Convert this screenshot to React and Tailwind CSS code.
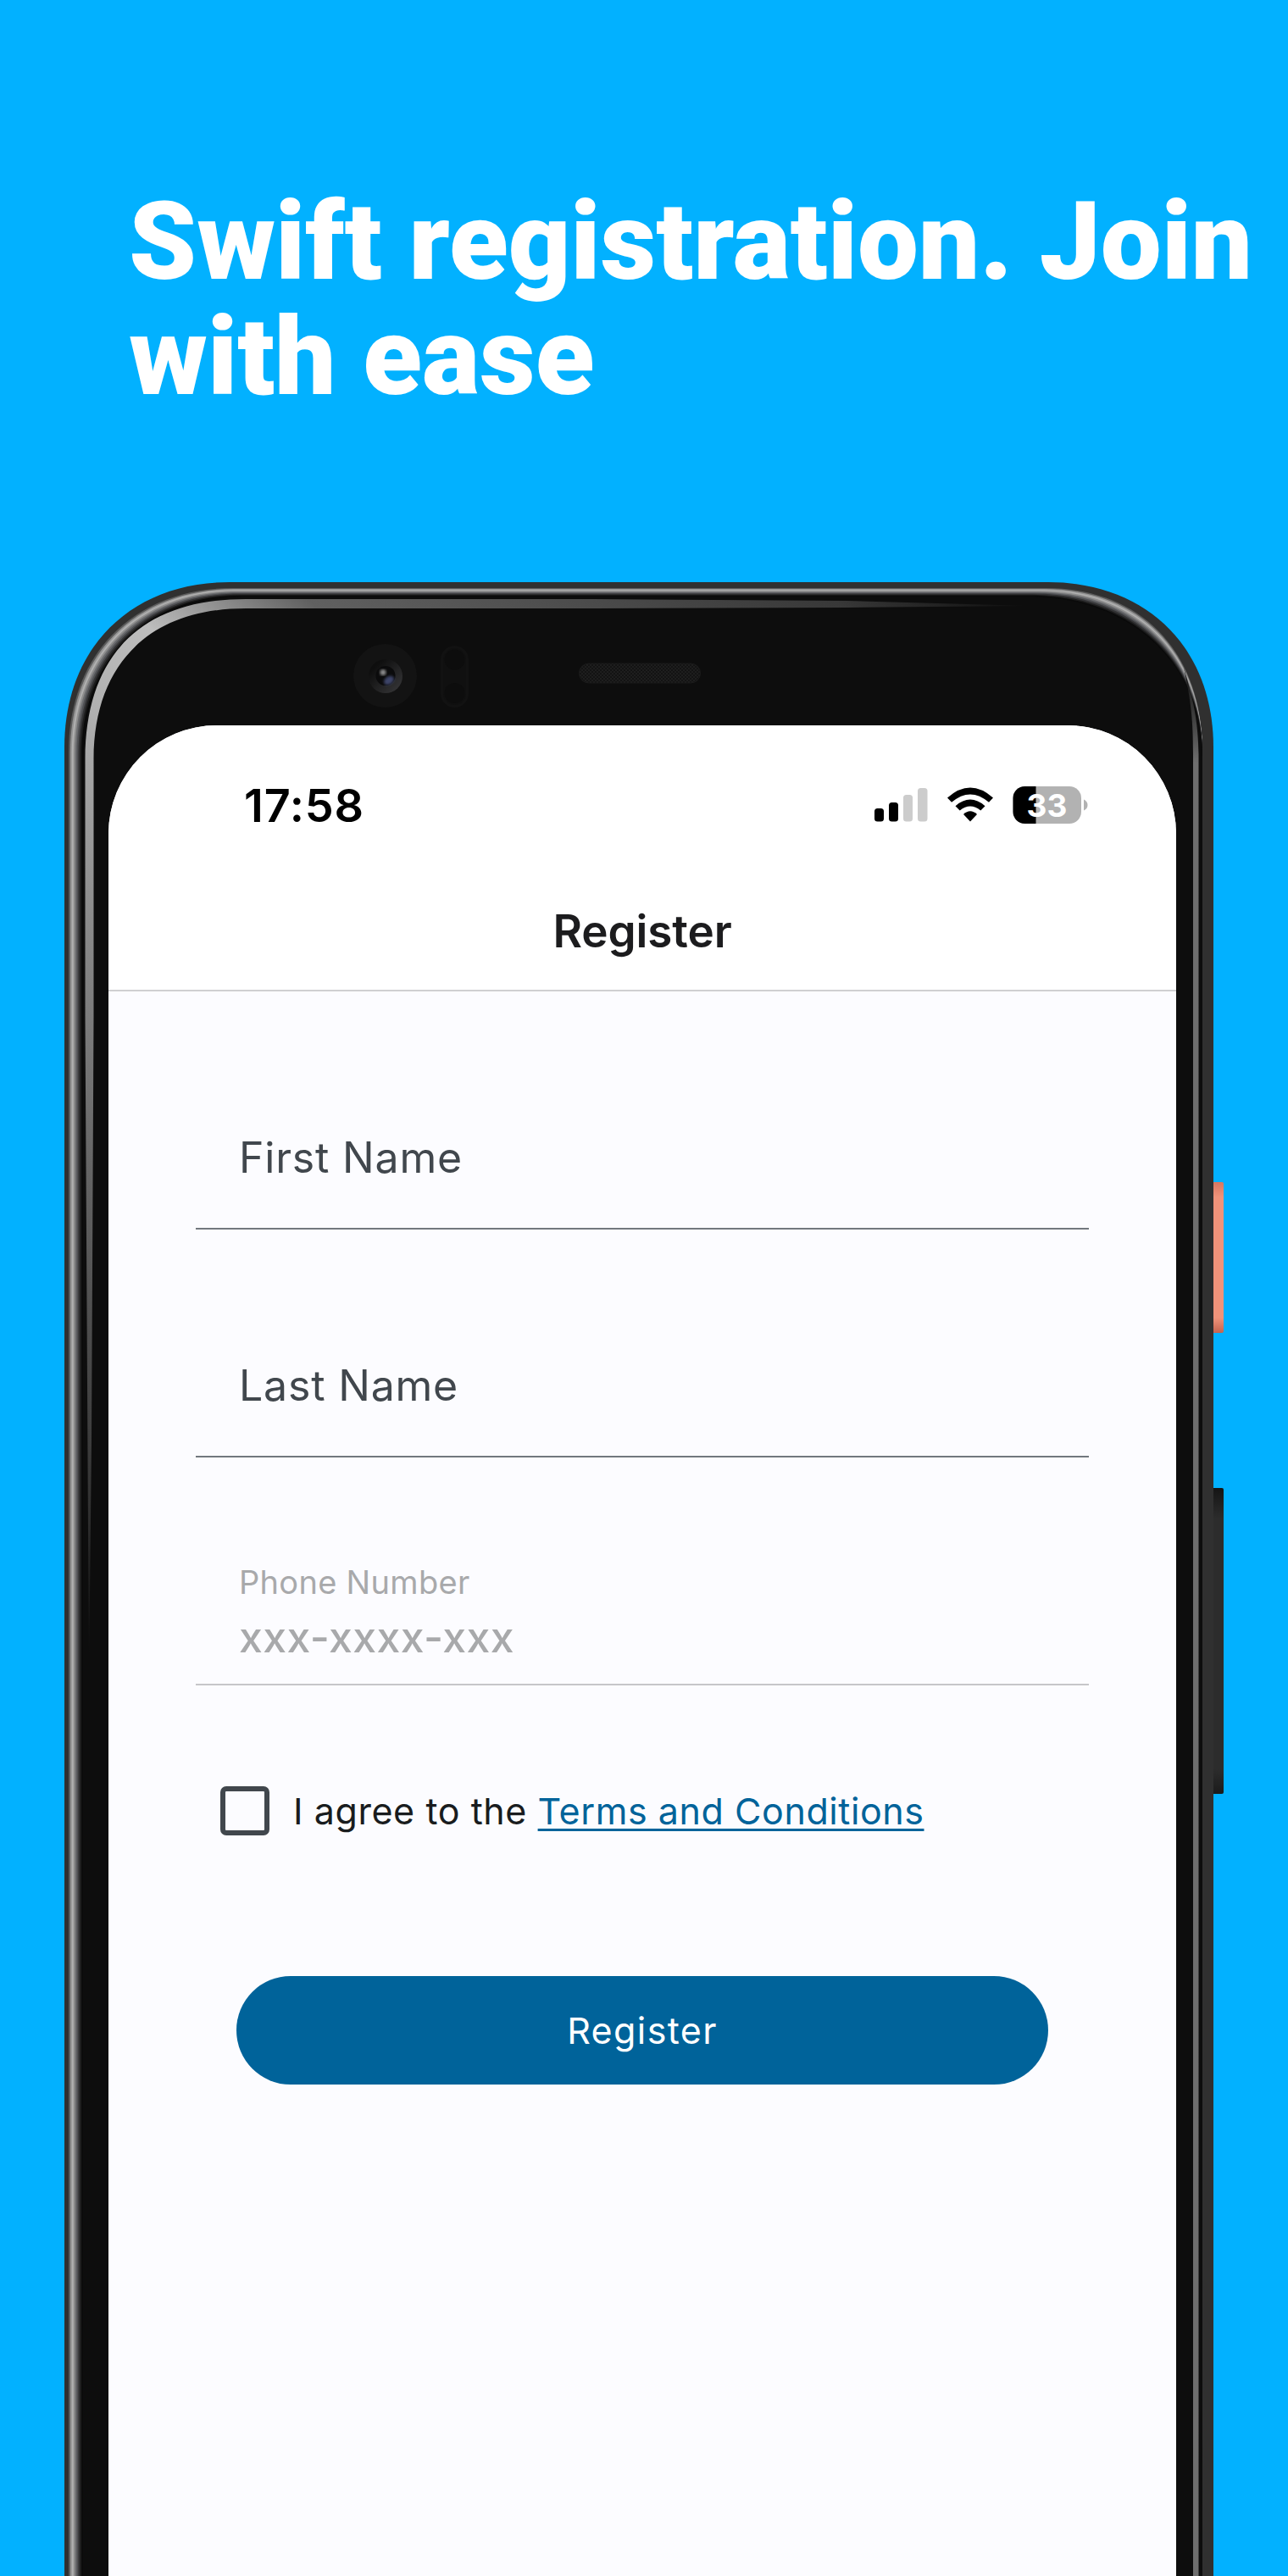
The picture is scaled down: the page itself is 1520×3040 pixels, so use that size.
const frame = (l, t, rx, r, b = 3060) => {
  const c = 195 - (l - 76) * 0.3;
  const k = 0.4 * c;
  return `M${l} ${b}V${t + c}C${l} ${t + k} ${l + k} ${t} ${l + c} ${t}H${r - rx}C${r - rx * 0.4} ${t} ${r} ${t + rx * 0.4} ${r} ${t + c}V${b}Z`;
};

const rim = ['#5a5a5a', '#949494', '#b0b0b0', '#8f8f8f', '#6c6d70', '#505154', '#333335', '#1c1c1c', '#0a0a0a'];

function Bezel() {
  return (
    <svg className="absolute inset-0" width="1520" height="3040" viewBox="0 0 1520 3040" fill="none">
      <defs>
        <linearGradient id="glow" gradientUnits="userSpaceOnUse" x1="100" y1="1950" x2="1215" y2="712">
          <stop offset="0" stopColor="#0d0d0d" />
          <stop offset="0.09" stopColor="#353535" />
          <stop offset="0.39" stopColor="#8c8c8c" />
          <stop offset="0.5" stopColor="#b0b0b0" />
          <stop offset="0.57" stopColor="#bdbdbd" />
          <stop offset="0.66" stopColor="#606060" />
          <stop offset="0.75" stopColor="#525252" />
          <stop offset="0.91" stopColor="#383838" />
          <stop offset="1" stopColor="#0d0d0d" />
        </linearGradient>
        <linearGradient id="side" gradientUnits="userSpaceOnUse" x1="0" y1="790" x2="0" y2="900">
          <stop offset="0" stopColor="#0d0d0d" />
          <stop offset="1" stopColor="#6e6e6e" />
        </linearGradient>
        <linearGradient id="lens" x1="0" y1="0" x2="1" y2="1">
          <stop offset="0.2" stopColor="#0e0e0e" />
          <stop offset="1" stopColor="#3a3a3c" />
        </linearGradient>
        <linearGradient id="power" x1="0" y1="0" x2="0" y2="1">
          <stop offset="0" stopColor="#d8765f" />
          <stop offset="0.1" stopColor="#f0937a" />
          <stop offset="0.9" stopColor="#f0937a" />
          <stop offset="1" stopColor="#c4634f" />
        </linearGradient>
        <linearGradient id="volume" x1="0" y1="0" x2="0" y2="1">
          <stop offset="0" stopColor="#151515" />
          <stop offset="0.1" stopColor="#2c2c2c" />
          <stop offset="0.92" stopColor="#2c2c2c" />
          <stop offset="1" stopColor="#1b1b1b" />
        </linearGradient>
        <pattern id="mesh" width="4" height="4" patternUnits="userSpaceOnUse">
          <rect width="4" height="4" fill="#131313" />
          <rect width="2" height="2" fill="#1e1e1e" />
          <rect x="2" y="2" width="2" height="2" fill="#1e1e1e" />
        </pattern>
        <filter id="soft"><feGaussianBlur stdDeviation="1.5" /></filter>
      </defs>
      <rect x="1430" y="1395" width="14" height="178" rx="2" fill="url(#power)" />
      <rect x="1430" y="1756" width="14" height="361" rx="2" fill="url(#volume)" />
      <path d={frame(76, 687, 195, 1432)} fill="#303030" />
      {rim.map((c, i) => (
        <path key={c} d={frame(81 + i * 1.9, 694 + i * 1.1, 184 + i * 2.5, 1419)} fill={c} />
      ))}
      <path d={frame(98, 704, 206, 1419)} fill="#0d0d0d" />
      <path
        d="M105 1980L100.500 1200V895C101 775 165 707 290 707H700L1000 709L1215 715L1000 717L700 718H290C175 718 111 785 110.500 895V1200L108 1700Z"
        fill="url(#glow)"
      />
      <path d="M1397 788C1406 830 1408 850 1408 890V3060H1414.500V890C1414 850 1408 825 1397 788Z" fill="url(#side)" />
      <circle cx="454.500" cy="797.500" r="37.500" fill="#131313" />
      <circle cx="455" cy="798" r="20" fill="url(#lens)" />
      <circle cx="455" cy="797.500" r="11.500" fill="#0b0b0c" />
      <ellipse cx="459" cy="803" rx="6.500" ry="4.500" transform="rotate(-35 459 803)" fill="#3d4569" filter="url(#soft)" />
      <circle cx="452" cy="793.500" r="3.500" fill="#8b8b8b" filter="url(#soft)" />
      <rect x="521.500" y="763.500" width="30" height="70" rx="15" fill="#101010" stroke="#121212" strokeWidth="3" />
      <circle cx="536.500" cy="778.500" r="12" fill="#0d0d0d" />
      <circle cx="536.500" cy="818" r="12" fill="#0d0d0d" />
      <rect x="683.500" y="783" width="143" height="23" rx="11.500" fill="url(#mesh)" stroke="#1b1b1b" />
    </svg>
  );
}

function StatusBar() {
  return (
    <div className="flex h-[187px] items-start pl-[160px] pr-[104px] pt-[67px]">
      <span className="font-['Inter',sans-serif] text-[54px] font-semibold leading-[56px] tracking-[0.8px]">17:58</span>
      <svg className="ml-auto" width="252" height="56" viewBox="1032 923 252 56">
        <rect x="1032" y="954" width="11" height="15.500" rx="3.500" />
        <rect x="1049" y="947" width="11" height="22.500" rx="3.500" />
        <rect x="1066" y="938" width="11" height="31.500" rx="3.500" fill="#ccc" />
        <rect x="1083" y="930" width="11.500" height="39.500" rx="3.500" fill="#ccc" />
        <path d="M1118 941.500Q1145 917.500 1172 941.500L1167 946.800Q1145 928 1123 946.800Z" />
        <path d="M1127.500 951.200Q1145 936 1162.500 951.200L1157.300 956.500Q1145 946.500 1132.700 956.500Z" />
        <path d="M1137 961Q1145 953.500 1153 961L1145 969.500Z" />
        <clipPath id="charge"><rect x="1195.500" y="928" width="80.500" height="44" rx="14" /></clipPath>
        <g clipPath="url(#charge)">
          <rect x="1195" y="927" width="82" height="46" fill="#b2b2b2" />
          <rect x="1195" y="927" width="27.500" height="46" />
        </g>
        <path d="M1279 943.500Q1283.500 945.500 1283.500 950T1279 956.500Z" fill="#b2b2b2" />
        <text x="1235.500" y="963.500" textAnchor="middle" fill="#fff" className="font-['Inter',sans-serif] text-[37px] font-bold">33</text>
      </svg>
    </div>
  );
}

function Field({ label }) {
  return (
    <div className="flex h-[269px] items-end border-b-2 border-[#72787e] pb-[55px] pl-[51px]">
      <label className="text-[50px] leading-[56px] tracking-[0.8px] text-[#41474d]">{label}</label>
    </div>
  );
}

export default function App() {
  return (
    <main className="relative h-[3040px] w-[1520px] overflow-hidden bg-[#02b1ff] font-['Inter',sans-serif]">
      <Bezel />
      <div className="relative flex h-full flex-col">
        <h1 className="h-[856px] shrink-0 whitespace-nowrap pl-[152px] pt-[217px] font-['Roboto',sans-serif] text-[128px] font-black leading-[136px] text-white">
          Swift registration. Join
          <br />
          with ease
        </h1>
        <section className="ml-[128px] h-[2184px] w-[1260px] overflow-hidden rounded-t-[128px] bg-[#fcfcff]">
          <header className="h-[314px] border-b-2 border-[#cfcfd1] bg-white">
            <StatusBar />
            <h2 className="pt-[26px] text-center text-[53px] font-semibold leading-[60px] tracking-[-0.1px] text-[#1c1c1e]">Register</h2>
          </header>
          <form className="px-[103px] pt-[12px]">
            <Field label="First Name" />
            <Field label="Last Name" />
            <div className="h-[269px] border-b-2 border-[#c6c6c9] pl-[51px] pt-[124px] text-[#a8a9ab]">
              <div className="text-[38px] leading-[46px] tracking-[0.3px]">Phone Number</div>
              <div className="pt-[12px] text-[50px] font-medium leading-[60px] tracking-[0.4px]">xxx-xxxx-xxx</div>
            </div>
            <div className="mt-[119px] flex h-[58px] items-center pl-[29px]">
              <span className="h-[58px] w-[58px] shrink-0 rounded-[7px] border-[6px] border-[#41474d]" />
              <p className="whitespace-nowrap pl-[28px] text-[43px] leading-[58px] tracking-[0.57px] text-[#191c1e]">
                I agree to the <a className="text-[#00639a] underline decoration-[3px] underline-offset-[5px]">Terms and Conditions</a>
              </p>
            </div>
            <button type="button" className="ml-[48px] mt-[166px] block h-[128px] w-[958px] rounded-full bg-[#00639a] text-[43px] tracking-[1.4px] text-white">Register</button>
          </form>
        </section>
      </div>
    </main>
  );
}
